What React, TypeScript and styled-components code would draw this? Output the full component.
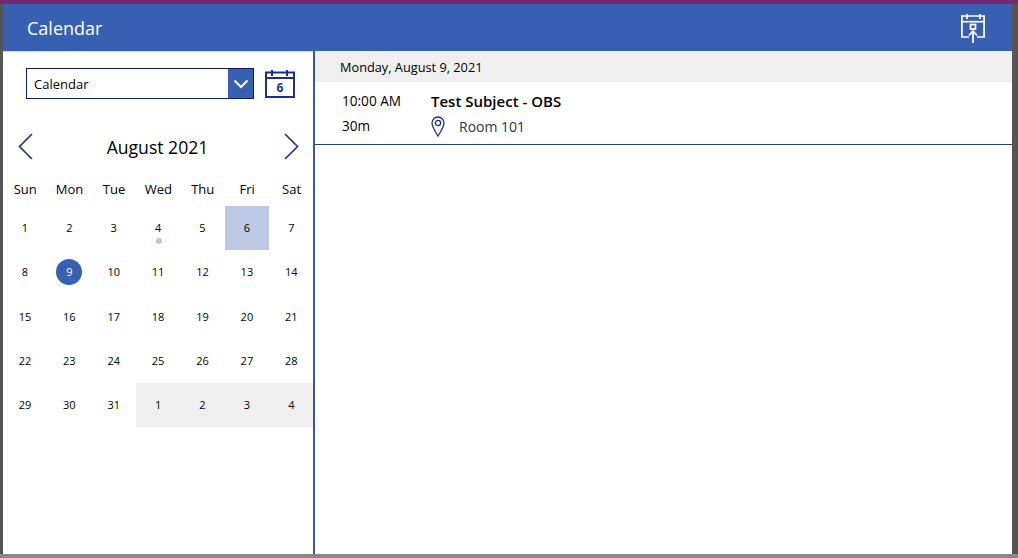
import React from "react";
import styled, { createGlobalStyle } from "styled-components";

const Global = createGlobalStyle`
  html, body { margin: 0; padding: 0; background: #fff; }
  body { font-family: "Open Sans", "Liberation Sans", sans-serif; color: #000; }
  * { box-sizing: border-box; }
`;

const Frame = styled.div`
  width: 1018px; height: 558px; display: flex; flex-direction: column; overflow: hidden;
  background: #555;
  border-top: 4px solid #742774;
`;
const Stage = styled.div`
  flex: 1; min-height: 0; display: flex; flex-direction: column;
  margin: 0 6px 0 3px; background: #fff;
`;
const Footer = styled.div`height: 4px; background: #888; flex: none;`;
const Header = styled.header`
  height: 47px; flex: none; background: #3860b2; display: flex; align-items: center;
  justify-content: space-between; padding: 1px 27px 0 24px; color: #fff;
  font-size: 18px; line-height: 46px; box-shadow: 0 1px 0 #cfdaee;
`;
const Body = styled.div`flex: 1; min-height: 0; display: flex;`;
const Left = styled.aside`
  width: 312px; flex: none; border-right: 2px solid #44549c; display: flex; flex-direction: column;
`;
const Right = styled.main`flex: 1; min-width: 0; display: flex; flex-direction: column;`;
const PickerRow = styled.div`
  display: flex; align-items: center; padding: 17px 0 0 23px; gap: 11px; height: 48px;
`;
const Select = styled.div`
  width: 228px; height: 31px; border: 1px solid #0b1a6e; display: flex; align-items: center;
  justify-content: space-between; font-size: 13px; padding-left: 7px;
`;
const Caret = styled.div`
  width: 25px; height: 29px; background: #3860b2; display: flex; align-items: center; justify-content: center;
`;
const MonthRow = styled.div`
  display: flex; align-items: center; justify-content: space-between;
  margin-top: 29px; height: 36px; padding: 0 14px 0 15px; font-size: 17.6px;
`;
const MonthLabel = styled.span`padding: 2px 2px 0 0;`;
const Chevron = styled.svg`display: block;`;
const Cal = styled.div`
  display: grid; grid-template-columns: repeat(7, 44.4px); grid-auto-rows: 44.25px; width: 310px; overflow: hidden;
`;
const WeekRow = styled.div`
  display: grid; grid-template-columns: repeat(7, 44.4px); width: 310px; height: 34px; margin-top: 8px;
  align-items: center; font-size: 13px; text-align: center;
`;
const Day = styled.div<{ $bg?: string }>`
  position: relative; display: flex; align-items: center; justify-content: center;
  font-size: 11px; padding: 0 0.5px 1px 0; background: ${(p) => p.$bg || "transparent"};
`;
const Today = styled.span`
  width: 26px; height: 26px; border-radius: 50%; background: #3860b2; color: #fff;
  display: flex; align-items: center; justify-content: center;
`;
const Dot = styled.span`
  position: absolute; left: 19.5px; top: 32px; width: 6px; height: 6px; border-radius: 50%; background: #b9c7e4;
`;
const DateBar = styled.div`
  height: 31px; flex: none; background: #efefef; padding-left: 25px; font-size: 12.75px;
  line-height: 32px;
`;
const Event = styled.div`
  height: 63px; flex: none; border-bottom: 1px solid #2b3f8f; display: grid;
  grid-template-columns: 89px 1fr; padding-left: 27px;
`;
const Times = styled.div`display: flex; flex-direction: column; padding-top: 6px; font-size: 13.6px; line-height: 25px;`;
const Info = styled.div`display: flex; flex-direction: column; padding-top: 9px;`;
const Subject = styled.div`font-size: 15px; font-weight: 600; line-height: 20px;`;
const Place = styled.div`display: flex; align-items: center; gap: 14px; font-size: 14px; color: #333; line-height: 22px; height: 24px; margin-top: 3px;`;
const PlaceText = styled.span`padding-top: 2px;`;

const weeks = [
  ["1","2","3","4","5","6","7"],
  ["8","9","10","11","12","13","14"],
  ["15","16","17","18","19","20","21"],
  ["22","23","24","25","26","27","28"],
  ["29","30","31","1","2","3","4"],
];
const names = ["Sun","Mon","Tue","Wed","Thu","Fri","Sat"];

function CalIcon() {
  return (
    <svg width="30" height="28" viewBox="0 0 30 28" fill="none" stroke="#1d2f86" strokeWidth="2">
      <rect x="1" y="2.500" width="28" height="24.500" />
      <path d="M1 8h28" />
      <path d="M7 0v6M22 0v6" />
      <text x="15" y="22" fontSize="12" fontWeight="700" textAnchor="middle" fill="#1d2f86" stroke="none" fontFamily="Open Sans">6</text>
    </svg>
  );
}
function UploadIcon() {
  return (
    <svg width="24" height="29" viewBox="0 0 24 29" fill="none" stroke="#fff" strokeWidth="1.700">
      <path d="M8 23H0.900V2h22.200v21H16" />
      <path d="M0.900 7.700h22.200" />
      <path d="M6 0v5M19 0v5" />
      <rect x="9.500" y="10.500" width="5" height="4.500" />
      <path d="M12 29V17.500M8 21.500l4-4.500 4 4.500" />
    </svg>
  );
}

export default function App() {
  return (
    <>
      <Global />
      <Frame>
        <Stage>
          <Header>
            <span>Calendar</span>
            <UploadIcon />
          </Header>
          <Body>
            <Left>
              <PickerRow>
                <Select>
                  <span>Calendar</span>
                  <Caret>
                    <svg width="16" height="10" viewBox="0 0 16 10" fill="none" stroke="#fff" strokeWidth="2"><path d="M1.500 1.500L8 8l6.500-6.500" /></svg>
                  </Caret>
                </Select>
                <CalIcon />
              </PickerRow>
              <MonthRow>
                <Chevron width="15" height="27" viewBox="0 0 15 27" fill="none" stroke="#1d2f86" strokeWidth="1.600"><path d="M14 1L1.500 13.500 14 26" /></Chevron>
                <MonthLabel>August 2021</MonthLabel>
                <Chevron width="15" height="27" viewBox="0 0 15 27" fill="none" stroke="#1d2f86" strokeWidth="1.600"><path d="M1 1l12.500 12.500L1 26" /></Chevron>
              </MonthRow>
              <WeekRow>
                {names.map((n) => <span key={n}>{n}</span>)}
              </WeekRow>
              <Cal>
                {weeks.map((w, i) =>
                  w.map((d, j) => {
                    const other = i === 4 && j >= 3;
                    const selected = i === 0 && j === 5;
                    const today = i === 1 && j === 1;
                    return (
                      <Day key={`${i}-${j}`} $bg={other ? "#efefef" : selected ? "#bccae6" : undefined}>
                        {today ? <Today>{d}</Today> : d}
                        {i === 0 && j === 3 && <Dot />}
                      </Day>
                    );
                  })
                )}
              </Cal>
            </Left>
            <Right>
              <DateBar>Monday, August 9, 2021</DateBar>
              <Event>
                <Times>
                  <span>10:00 AM</span>
                  <span>30m</span>
                </Times>
                <Info>
                  <Subject>Test Subject - OBS</Subject>
                  <Place>
                    <svg width="14" height="21" viewBox="0 0 14 21" fill="none" stroke="#1d2f86" strokeWidth="1.300"><path d="M7 20C4 15 1 11 1 7a6 6 0 0 1 12 0c0 4-3 8-6 13z" /><circle cx="7" cy="7" r="2.600" /></svg>
                    <PlaceText>Room 101</PlaceText>
                  </Place>
                </Info>
              </Event>
            </Right>
          </Body>
        </Stage>
        <Footer />
      </Frame>
    </>
  );
}
